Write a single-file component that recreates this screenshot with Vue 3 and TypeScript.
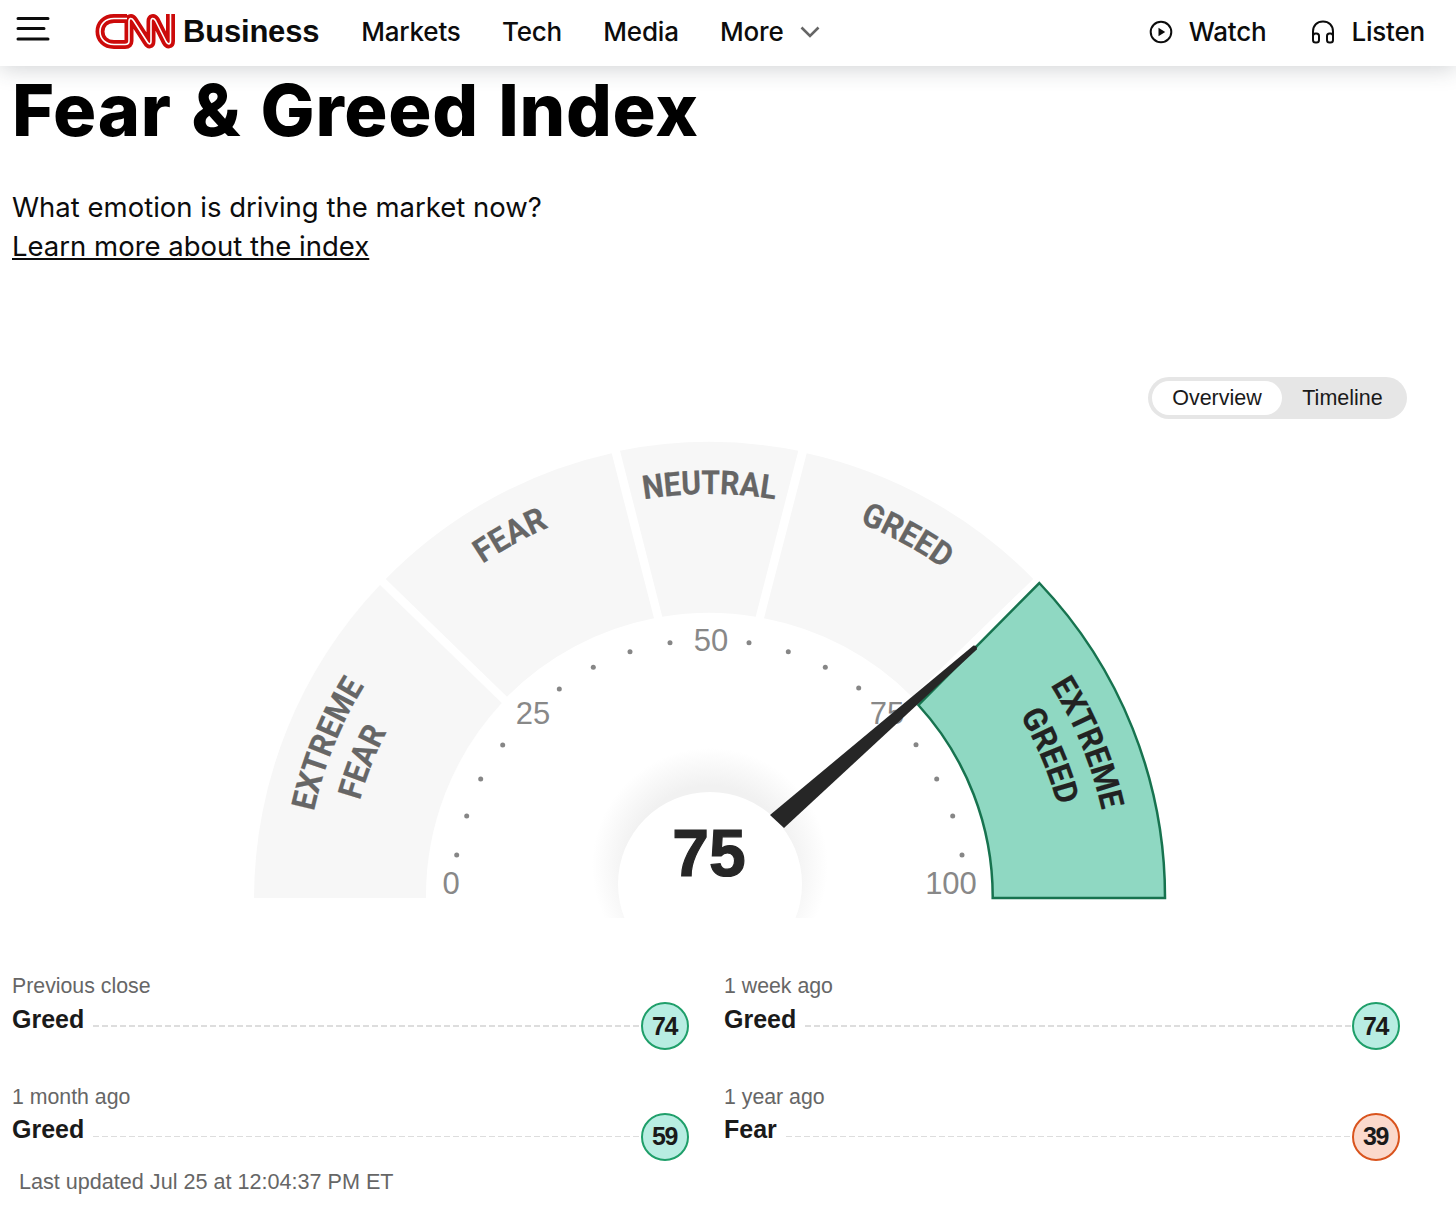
<script setup lang="ts">
const cx = 709.5
const cy = 898

interface Tick { x: number; y: number }
const ticks: Tick[] = [
  [456.7, 855], [466.7, 816], [480.7, 779], [502.7, 745],
  [559.3, 689], [593.3, 667.3], [630, 651.7], [670, 642.7],
  [749, 642.7], [788.3, 651.7], [825.3, 667.3], [858.7, 688],
  [916, 744.7], [936.7, 779], [952.7, 816], [962, 855],
].map(([x, y]) => ({ x, y }))

const grey = [
  'M254 898 A455.5 455.5 0 0 1 380 585 L501.7 703 A284 284 0 0 0 426 898 Z',
  'M385.7 579 A455.5 455.5 0 0 1 611.7 453.3 L654 618.3 A284 284 0 0 0 507 696.7 Z',
  'M620 450.7 A455.5 455.5 0 0 1 798.3 450.7 L755.7 616.7 A284 284 0 0 0 662.3 616.7 Z',
  'M806.7 453.3 A455.5 455.5 0 0 1 1033.3 579 L912 696.7 A284 284 0 0 0 764 618.3 Z',
]

const arc = (r: number) => `M${cx - r} ${cy} A${r} ${r} 0 0 1 ${cx + r} ${cy}`

interface Lab { text: string; r: number; at: number; len: number; dark?: boolean }
const labels: Lab[] = [
  { text: 'EXTREME', r: 405, at: 12.2, len: 136 },
  { text: 'FEAR', r: 363, at: 11.9, len: 74 },
  { text: 'FEAR', r: 404, at: 34, len: 76 },
  { text: 'NEUTRAL', r: 404, at: 50, len: 132 },
  { text: 'GREED', r: 404, at: 65.9, len: 96 },
  { text: 'EXTREME', r: 402, at: 87.6, len: 136, dark: true },
  { text: 'GREED', r: 360, at: 87.4, len: 98, dark: true },
]

const radii = [...new Set(labels.map(l => l.r))]

const ribbon = 'M32 5.5H19C10 5.500 5 11.500 5 18.500C5 25.500 10 31.500 19 31.500H30C33 31.500 34 30 34 28V8.500C34 5 36.500 4.500 38.500 7.500L52 28.500C54 32 56 31.500 56 28V8.500C56 5 58.500 4.500 60.500 7.500L71 28.500C73 32 75.500 31.500 75.500 28V1'

interface Stat { label: string; name: string; value: number; fear?: boolean }
const stats: Stat[] = [
  { label: 'Previous close', name: 'Greed', value: 74 },
  { label: '1 week ago', name: 'Greed', value: 74 },
  { label: '1 month ago', name: 'Greed', value: 59 },
  { label: '1 year ago', name: 'Fear', value: 39, fear: true },
]
</script>

<template>
  <div class="page">
    <header class="topbar">
      <svg class="burger" width="34" height="26" viewBox="0 0 34 26">
        <path d="M2 2.5H32M2 12.5H28M2 23H32" fill="none" stroke="#0c0c0c" stroke-width="3" stroke-linecap="round" />
      </svg>
      <svg class="logo" width="82" height="38" viewBox="0 0 82 38">
        <g fill="none" stroke-linejoin="round">
          <path :d="ribbon" stroke="#cc0a0a" stroke-width="9" />
          <path :d="ribbon" stroke="#fff" stroke-width="1.6" />
        </g>
      </svg>
      <span class="brand">Business</span>
      <nav class="nav">
        <a>Markets</a>
        <a>Tech</a>
        <a>Media</a>
        <a class="more">More
          <svg width="20" height="12" viewBox="0 0 20 12">
            <path d="M1.5 1.5L10 10L18.500 1.5" fill="none" stroke="#666" stroke-width="2.6" />
          </svg>
        </a>
      </nav>
      <div class="actions">
        <a class="action watch">
          <svg width="24" height="24" viewBox="0 0 24 24">
            <circle cx="12" cy="12" r="10.300" fill="none" stroke="#0c0c0c" stroke-width="2" />
            <path d="M9.500 7.800L16.200 12L9.500 16.200Z" fill="#0c0c0c" />
          </svg>
          Watch
        </a>
        <a class="action">
          <svg width="24" height="24" viewBox="0 0 24 24">
            <path d="M2 18V11.500C2 5.500 6 1.500 12 1.500S22 5.500 22 11.500V18" fill="none" stroke="#0c0c0c" stroke-width="2" />
            <rect x="2" y="13.500" width="6" height="9" rx="2.500" fill="none" stroke="#0c0c0c" stroke-width="2" />
            <rect x="16" y="13.500" width="6" height="9" rx="2.500" fill="none" stroke="#0c0c0c" stroke-width="2" />
          </svg>
          Listen
        </a>
      </div>
    </header>

    <main class="content">
      <h1>Fear &amp; Greed Index</h1>
      <p class="lead">What emotion is driving the market now?</p>
      <a class="learn">Learn more about the index</a>

      <div class="toggle-row">
        <div class="toggle">
          <span class="opt on">Overview</span>
          <span class="opt">Timeline</span>
        </div>
      </div>

      <svg class="gauge" width="1456" height="510" viewBox="0 420 1456 510">
        <defs>
          <path v-for="r in radii" :id="'arc' + r" :key="r" :d="arc(r)" />
          <radialGradient id="halo" gradientUnits="userSpaceOnUse" cx="710" cy="866" r="118">
            <stop offset="0.68" stop-color="#f1f1f1" />
            <stop offset="1" stop-color="#ffffff" />
          </radialGradient>
          <clipPath id="hub-clip">
            <rect x="500" y="700" width="420" height="218" />
          </clipPath>
        </defs>

        <path v-for="(d, i) in grey" :key="i" :d="d" fill="#f7f7f7" />

        <circle v-for="(t, i) in ticks" :key="'t' + i" :cx="t.x" :cy="t.y" r="2.500" fill="#868686" />
        <text class="num" x="451" y="894" text-anchor="middle">0</text>
        <text class="num" x="533" y="724" text-anchor="middle">25</text>
        <text class="num" x="711" y="651" text-anchor="middle">50</text>
        <text class="num" x="887" y="724" text-anchor="middle">75</text>
        <text class="num" x="951" y="894" text-anchor="middle">100</text>

        <path
          d="M1039.300 583 A455.500 455.500 0 0 1 1165 898 L992.700 898 A284 284 0 0 0 918.300 705 Z"
          fill="#8fd8c2"
          stroke="#17734f"
          stroke-width="2.500"
        />

        <text
          v-for="(l, i) in labels"
          :key="'l' + i"
          class="seg"
          :class="{ dark: l.dark }"
          text-anchor="middle"
          :textLength="l.len"
          lengthAdjust="spacingAndGlyphs"
        >
          <textPath :href="'#arc' + l.r" :startOffset="l.at + '%'">{{ l.text }}</textPath>
        </text>

        <g clip-path="url(#hub-clip)">
          <circle cx="710" cy="866" r="118" fill="url(#halo)" />
          <circle cx="710" cy="884" r="92" fill="#fff" />
        </g>
        <text class="score" x="709" y="876" text-anchor="middle">75</text>

        <path d="M770 815L973.500 645.500L975.500 645.700L977 647.500L976.800 649.500L784 828Z" fill="#262626" />
      </svg>

      <section class="stats">
        <div v-for="s in stats" :key="s.label" class="stat">
          <div class="stat-label">{{ s.label }}</div>
          <div class="stat-row">
            <span class="stat-name">{{ s.name }}</span>
            <span class="dash"></span>
            <span class="badge" :class="{ fear: s.fear }">{{ s.value }}</span>
          </div>
        </div>
      </section>
      <p class="updated">Last updated Jul 25 at 12:04:37 PM ET</p>
    </main>
  </div>
</template>

<style scoped>
.page {
  width: 1456px;
  height: 1220px;
  overflow: hidden;
  background: #fff;
  font-family: "Liberation Sans", Arial, sans-serif;
  color: #0c0c0c;
}
.topbar {
  position: relative;
  z-index: 0;
  height: 66px;
  box-sizing: border-box;
  padding-bottom: 3px;
  display: flex;
  align-items: center;
  background: #fff;
  box-shadow: 0 3px 22px rgba(50, 60, 70, 0.22);
  font-family: Inter, "Liberation Sans", sans-serif;
  font-weight: 500;
  font-size: 26px;
  letter-spacing: -0.2px;
}
.burger { margin-left: 16px; margin-bottom: 5px; }
.logo { margin-left: 45px; }
.brand {
  margin-left: 6px;
  font-family: "Liberation Sans", sans-serif;
  font-weight: 700;
  font-size: 31px;
  letter-spacing: -0.2px;
}
.nav { display: flex; margin-left: 42px; gap: 41.300px; }
.more { display: flex; align-items: center; gap: 17px; }
.actions { margin-left: auto; margin-right: 31px; display: flex; gap: 45px; }
.action { display: flex; align-items: center; gap: 16px; }
.content { padding: 0 12px; }
h1 {
  margin: 0;
  padding-top: 5px;
  font-family: Inter, "Liberation Sans", sans-serif;
  font-size: 72px;
  line-height: 78px;
  font-weight: 800;
  letter-spacing: 0.7px;
  word-spacing: 3px;
  color: #000;
}
.lead {
  margin: 39px 0 0;
  font-family: Inter, "Liberation Sans", sans-serif;
  font-size: 27.500px;
  line-height: 39px;
  color: #0c0c0c;
}
.learn {
  display: block;
  font-family: Inter, "Liberation Sans", sans-serif;
  font-size: 27.500px;
  line-height: 39px;
  text-decoration: underline;
  color: #0c0c0c;
}
.toggle-row {
  display: flex;
  justify-content: flex-end;
  margin-top: 111px;
  padding-right: 37px;
}
.toggle {
  display: flex;
  height: 42px;
  width: 259px;
  padding: 4px;
  box-sizing: border-box;
  background: #e6e6e6;
  border-radius: 21px;
  font-size: 21.500px;
  color: #1a1a1a;
}
.opt {
  display: flex;
  align-items: center;
  justify-content: center;
  width: 121px;
}
.opt.on {
  width: 130px;
  background: #fff;
  border-radius: 17px;
}
.gauge {
  display: block;
  margin: 1px 0 0 -12px;
}
.num {
  font-family: "Liberation Sans", sans-serif;
  font-size: 31px;
  fill: #888;
}
.seg {
  font-family: Roboto, "Liberation Sans", sans-serif;
  font-weight: 700;
  font-size: 33px;
  fill: #666;
  stroke: #666;
  stroke-width: 0.2px;
}
.seg.dark { fill: #222; stroke: #222; }
.score {
  font-family: "Liberation Sans", sans-serif;
  font-weight: 700;
  font-size: 66px;
  fill: #262626;
  stroke: #262626;
  stroke-width: 1.200px;
}
.stats {
  display: grid;
  grid-template-columns: 677px 676px;
  column-gap: 35px;
  margin-top: 42px;
}
.stat { height: 110.500px; }
.stat-label {
  font-size: 21.300px;
  line-height: 29px;
  color: #666;
}
.stat-row {
  display: flex;
  align-items: center;
  height: 48px;
  margin-top: 1px;
}
.stat-name {
  font-size: 25px;
  font-weight: 700;
  color: #1a1a1a;
  padding-bottom: 14px;
  margin-right: 9px;
}
.dash {
  flex: 1;
  height: 1.500px;
  background: repeating-linear-gradient(90deg, #ddd 0 6px, transparent 6px 9px);
}
.badge {
  flex: none;
  width: 48px;
  height: 48px;
  box-sizing: border-box;
  padding-right: 1px;
  display: flex;
  align-items: center;
  justify-content: center;
  border-radius: 50%;
  background: #b8ede2;
  border: 2px solid #1f9f6a;
  font-size: 25px;
  font-weight: 700;
  letter-spacing: -1.500px;
  color: #1a1a1a;
}
.badge.fear {
  background: #fbd9cc;
  border-color: #d9541e;
}
.updated {
  margin: -25px 0 0 7px;
  font-size: 21.600px;
  line-height: 28px;
  color: #666;
}
</style>
